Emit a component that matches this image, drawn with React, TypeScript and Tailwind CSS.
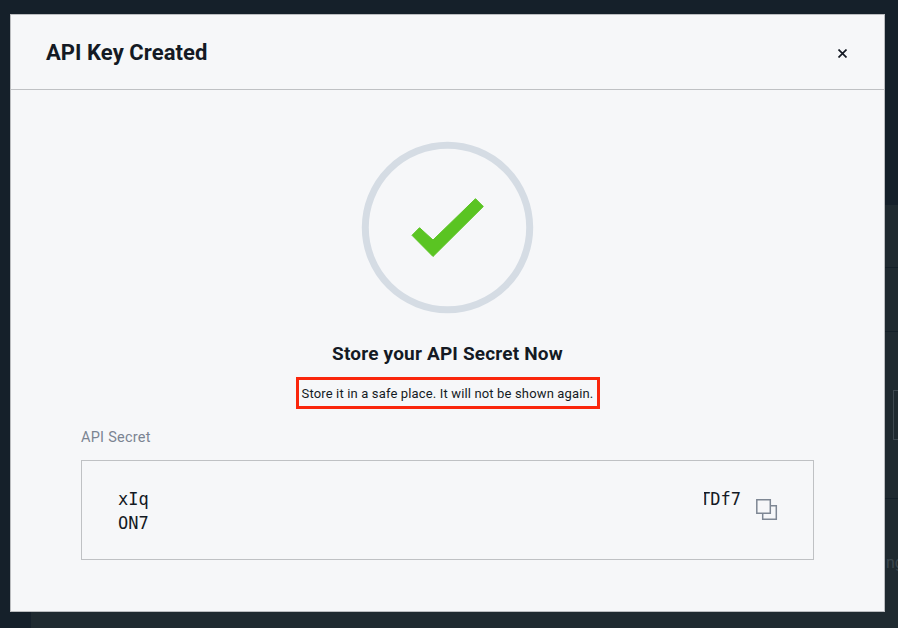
const sans = "font-['Roboto','Liberation_Sans',sans-serif]";
const mono = "font-['DejaVu_Sans_Mono','Liberation_Mono',monospace]";

function Backdrop() {
  return (
    <div className="flex h-full pl-[31px]">
      <div className="flex flex-1 flex-col pt-[205px]">
        <div className="h-[63px] shrink-0 border-b border-[#142028] bg-[#1f2a30]" />
        <div className="h-[64px] shrink-0 border-b border-[#142028] bg-[#1f2a30]" />
        <div className="flex h-[167px] shrink-0 justify-end border-b border-[#142028] bg-[#1f2a30] pt-[58px]">
          <div className="h-[50px] w-[5px] border-y border-l border-[#3d484f]" />
        </div>
        <div className="flex flex-1 justify-end overflow-hidden bg-[#1f2a30] pt-[52px]">
          <span className="w-[12px] whitespace-nowrap text-[16px] leading-6 text-[#3b464d]">ng</span>
        </div>
      </div>
    </div>
  );
}

function SuccessMark() {
  return (
    <svg className="mx-auto mt-[51px] block shrink-0" width="173" height="173" viewBox="361 141 173 173">
      <circle cx="447.5" cy="227.5" r="82.2" fill="none" stroke="#d5dce4" strokeWidth="7" />
      <path
        d="M412 235.3L419.5 227.7L433 240L475.5 198.7L483.3 206.5L433 256.5Z"
        fill="#5ac422"
        stroke="#5ac422"
        strokeWidth="1"
        strokeLinejoin="round"
      />
    </svg>
  );
}

function CopyIcon() {
  return (
    <svg width="22" height="22" viewBox="0 0 22 22" fill="none" stroke="#7e8794" strokeWidth="1.5">
      <path d="M15 6.7H20.3V20.3H6.7V15" />
      <path d="M0.8 0.8H14.3V14.3H0.8Z" />
    </svg>
  );
}

export default function App() {
  return (
    <div className={`relative h-[628px] w-[898px] overflow-hidden bg-[#15202a] text-[#141a24] ${sans}`}>
      <Backdrop />
      <section
        role="dialog"
        className="absolute top-[14px] left-[10px] flex h-[598px] w-[875px] flex-col border border-[#bbbdc0] bg-[#f6f7f9]"
      >
        <header className="flex h-[75px] shrink-0 items-center justify-between border-b border-[#bfc1c4] pr-[37px] pl-[35px]">
          <h1 className="text-[22px] font-bold tracking-[0.06px]">API Key Created</h1>
          <button aria-label="Close" className="mt-[2px]">
            <svg width="9" height="9" viewBox="0 0 9 9" stroke="#141a24" strokeWidth="1.7">
              <path d="M0.5 0.5L8.5 8.5M8.5 0.5L0.5 8.5" />
            </svg>
          </button>
        </header>
        <div className="flex flex-1 flex-col px-[70px]">
          <SuccessMark />
          <h2 className="mt-[28px] text-center text-[19px] leading-6 font-bold tracking-[0.18px]">
            Store your API Secret Now
          </h2>
          <div className="mx-auto mt-[11px] flex h-[32px] w-[304px] shrink-0 items-center justify-center border-3 border-[#fa260c] pt-px text-[13px] tracking-[0.15px] whitespace-nowrap">
            Store it in a safe place. It will not be shown again.
          </div>
          <div className="mt-[19px] text-[14.5px] leading-5 tracking-[0.25px] text-[#7b8492]">API Secret</div>
          <div className="mt-[12px] flex h-[100px] w-[733px] shrink-0 items-start border border-[#bfc1c4] pl-[36px]">
            <div className={`mt-[26px] text-[17px] leading-6 ${mono}`}>
              <div>xIq</div>
              <div>ON7</div>
            </div>
            <div className={`mt-[26px] ml-auto flex w-[37px] justify-end overflow-hidden text-[17px] leading-6 ${mono}`}>
              TDf7
            </div>
            <button aria-label="Copy" className="mt-[38px] mr-[35px] ml-[15px]">
              <CopyIcon />
            </button>
          </div>
        </div>
      </section>
    </div>
  );
}
